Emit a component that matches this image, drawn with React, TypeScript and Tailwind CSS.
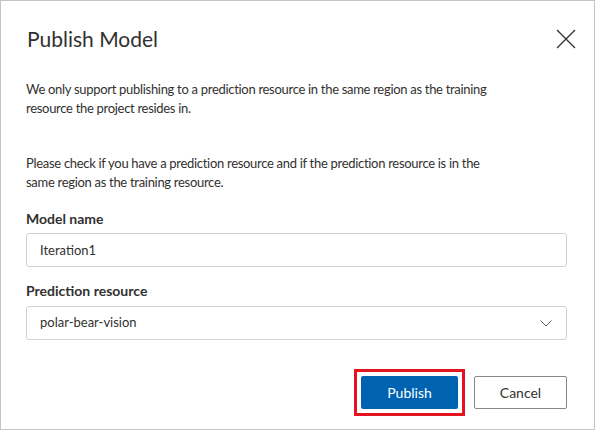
export default function App() {
  return (
    <div className="w-[595px] h-[430px] bg-white border border-[#c4c4c4] pl-[25px] pr-[27px] text-[#323130] font-[Lato,sans-serif]">
      {/* Header */}
      <div className="flex items-start justify-between pt-[24px]">
        <h1 className="text-[21px] leading-[28px] font-normal pl-[1px]">Publish Model</h1>
        <button type="button" className="mt-[4px] mr-[-9px] text-[#323130]" aria-label="Close">
          <svg width="20" height="20" viewBox="0 0 20 20" fill="none">
            <path d="M1 1L19 19M19 1L1 19" stroke="currentColor" strokeWidth="1.3" />
          </svg>
        </button>
      </div>

      {/* Description */}
      <div className="w-[470px] text-[13px] leading-[19px] tracking-[-0.3px]">
        <p className="mt-[27px]">
          We only support publishing to a prediction resource in the same region as the training resource the project resides in.
        </p>
        <p className="mt-[36px]">
          Please check if you have a prediction resource and if the prediction resource is in the same region as the training resource.
        </p>
      </div>

      {/* Model name */}
      <label className="block mt-[17px] text-[14px] leading-[20px] font-bold">Model name</label>
      <input
        type="text"
        defaultValue="Iteration1"
        className="block mt-[4px] w-full h-[34px] px-[13px] border border-[#d1d1d1] rounded-[3px] text-[13px] text-[#323130] outline-none"
      />

      {/* Prediction resource */}
      <label className="block mt-[14px] text-[14px] leading-[20px] font-bold">Prediction resource</label>
      <div className="mt-[5px] w-full h-[34px] pl-[13px] pr-[14px] border border-[#d1d1d1] rounded-[3px] flex items-center justify-between text-[13px]">
        <span>polar-bear-vision</span>
        <svg width="12" height="7" viewBox="0 0 12 7" fill="none" className="text-[#605e5c]">
          <path d="M0.5 0.5L6 6L11.5 0.5" stroke="currentColor" strokeWidth="1" />
        </svg>
      </div>

      {/* Buttons */}
      <div className="mt-[36px] flex justify-end items-center gap-[16px]">
        <div className="outline-[3px] outline-solid outline-[#e3141f] outline-offset-[4px]">
          <button
            type="button"
            className="block w-[97px] h-[33px] bg-[#0063b1] text-white text-[14px] rounded-[2px]"
          >
            Publish
          </button>
        </div>
        <button
          type="button"
          className="block w-[93px] h-[33px] bg-white border border-[#8a8886] text-[14px] rounded-[2px]"
        >
          Cancel
        </button>
      </div>
    </div>
  );
}
